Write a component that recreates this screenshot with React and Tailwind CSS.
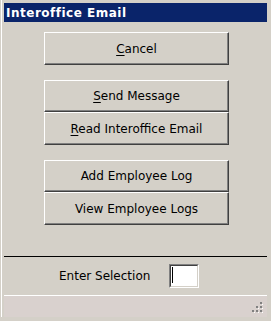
import React from "react";

const font = { fontFamily: "Tahoma, 'DejaVu Sans', sans-serif" };

const Btn = ({ h, children }) => (
    <button
        type="button"
        className={`w-full ${h} bg-[#d4d0c8] border-t border-l border-t-white border-l-white border-r border-b border-r-[#404040] border-b-[#404040] shadow-[inset_-1px_-1px_0_#808080] text-[12px] text-black flex items-center justify-center`}
    >
        {children}
    </button>
);

const Grip = () => (
    <svg width="12" height="12" viewBox="0 0 12 12">
        {[[8, 0], [4, 4], [8, 4], [0, 8], [4, 8], [8, 8]].map(([x, y]) => (
            <g key={`${x}-${y}`}>
                <rect x={x} y={y} width="2" height="2" fill="#808080" />
                <rect x={x + 2} y={y + 2} width="1" height="1" fill="#ffffff" />
            </g>
        ))}
    </svg>
);

export default function App() {
    return (
        <div className="w-[271px] h-[321px] bg-[#d4d0c8] pl-[1px] pb-[4px]" style={font}>
            <div className="h-full border-l border-white pl-[2px] pr-[4px] pt-[3px] flex flex-col">
                {/* title bar */}
                <div className="h-[19px] bg-[#0a246a] text-white font-bold text-[12px] tracking-[0.5px] pl-[2px] flex items-center">
                    Interoffice Email
                </div>

                {/* menu buttons */}
                <div className="ml-[40px] w-[185px] mt-[10px] flex flex-col">
                    <Btn h="h-[33px]">
                        <span><u className="underline-offset-2">C</u>ancel</span>
                    </Btn>
                    <div className="mt-[15px] flex flex-col">
                        <Btn h="h-[32px]">
                            <span><u className="underline-offset-2">S</u>end Message</span>
                        </Btn>
                        <Btn h="h-[33px]">
                            <span><u className="underline-offset-2">R</u>ead Interoffice Email</span>
                        </Btn>
                    </div>
                    <div className="mt-[15px] flex flex-col">
                        <Btn h="h-[32px]">Add Employee Log</Btn>
                        <Btn h="h-[33px]">View Employee Logs</Btn>
                    </div>
                </div>

                {/* separator */}
                <div className="mt-[31px] h-[1px] bg-black" />

                {/* selection row */}
                <div className="mt-[7px] h-[24px] flex items-center">
                    <span className="ml-[55px] w-[110px] text-[12px] text-black">Enter Selection</span>
                    <div className="w-[30px] h-[24px] border-t border-l border-t-[#808080] border-l-[#808080] border-r border-b border-r-white border-b-white">
                        <div className="w-full h-full bg-white border-t border-l border-t-[#404040] border-l-[#404040] border-r border-b border-r-[#d4d0c8] border-b-[#d4d0c8] pl-[1px] pt-[1px]">
                            <div className="w-[1px] h-[16px] bg-black" />
                        </div>
                    </div>
                </div>

                {/* status bar */}
                <div className="mt-[7px] h-[1px] bg-white" />
                <div className="flex-1 bg-[#d9d1ce] flex items-end justify-end pr-[3px] pb-[3px]">
                    <Grip />
                </div>
            </div>
        </div>
    );
}
